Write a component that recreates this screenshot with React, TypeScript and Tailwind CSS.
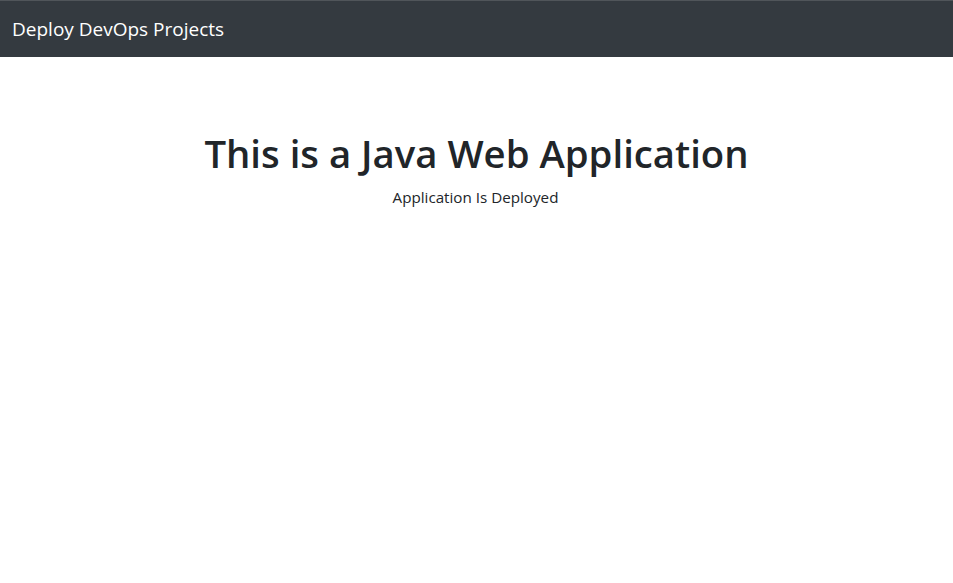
import React from 'react';

const App = () => {
  return (
    <div className="min-h-screen bg-white font-['Open_Sans','Noto_Sans',sans-serif] text-[#212529]">
      {/* Navbar */}
      <nav className="h-[57px] bg-[#343a40] border-t border-[#50555a] flex items-center px-3">
        <span className="text-[19px] text-white leading-[30px]">Deploy DevOps Projects</span>
      </nav>

      {/* Main */}
      <main className="pt-[72px] text-center">
        <h1 className="text-[38.3px] font-semibold leading-[48px] mb-[8px]">This is a Java Web Application</h1>
        <p className="text-[15.2px] leading-6 pr-[2px]">Application Is Deployed</p>
      </main>
    </div>
  );
};

export default App;
